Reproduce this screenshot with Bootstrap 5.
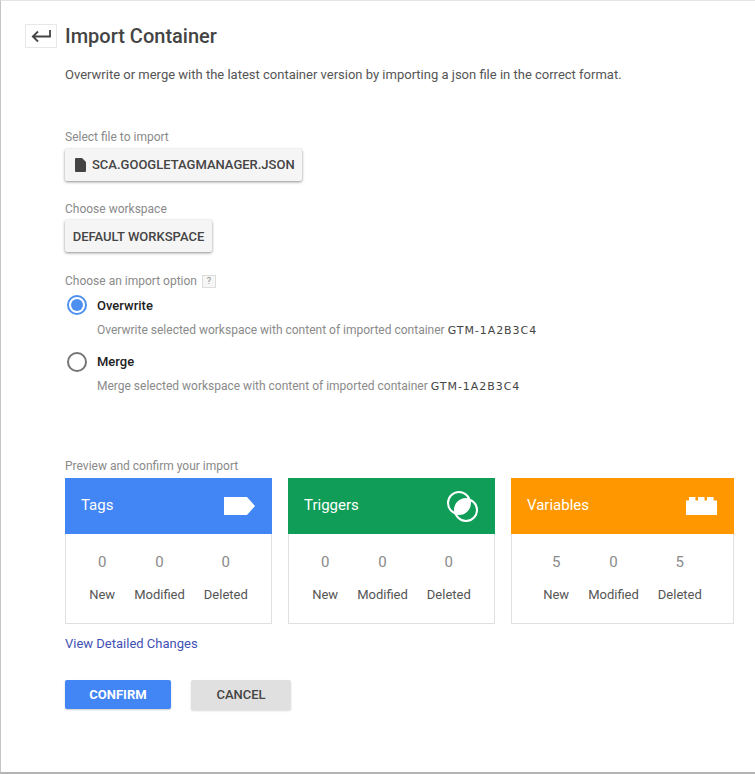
<!DOCTYPE html>
<html lang="en">
<head>
<meta charset="utf-8">
<title>Import Container</title>
<link href="https://cdn.jsdelivr.net/npm/bootstrap@5.3.0/dist/css/bootstrap.min.css" rel="stylesheet">
<style>
html,body{height:100%;}
body{background:#fff;font-family:Roboto,"Liberation Sans",sans-serif;color:#444;font-size:13px;overflow:hidden;}
.sheet{width:755px;height:774px;border-left:1px solid #c4c4c4;border-top:1px solid #e4e4e4;border-bottom:2px solid #b4b4b4;padding:0 21px 0 24px;}
.head-row{height:36px;margin-top:17px;}
.back-box{width:32px;height:24px;border:1px solid #e8e8e8;margin-right:8px;}
.page-title{font-size:20px;font-weight:500;color:#444;line-height:36px;margin:0;}
.intro{margin:11px 0 0 40px;line-height:20px;color:#555;font-size:13px;}
.body-wrap{padding-left:40px;}
.field-label{color:#8a8a8a;font-size:12px;line-height:16px;}
.gap-file{margin-top:44px;}
.gap-space{margin-top:20px;}
.gap-option{margin-top:21px;}
.gap-preview{margin-top:64px;}
.gtm-btn{background:#f5f5f5;color:#444;font-size:13px;font-weight:500;height:32px;padding:0;border:0;border-radius:2px;box-shadow:0 1px 3px rgba(0,0,0,.45);display:flex;align-items:center;white-space:nowrap;}
.btn-file{width:237px;margin-top:4px;padding-left:10px;}
.btn-file svg{margin-right:6px;flex:none;}
.btn-space{width:147px;margin-top:3px;padding-top:1px;justify-content:center;}
.help-box{width:14px;height:13px;border:1px solid #ddd;background:#f6f6f6;color:#888;font-size:9px;line-height:11px;text-align:center;margin-left:5px;}
.opt-row{margin-left:2px;}
.opt-first{margin-top:6px;}
.opt-next{margin-top:14px;}
.radio-ring{width:20px;height:20px;border-radius:50%;border:2px solid #757575;flex:none;}
.radio-ring.is-on{border-color:#4d90f0;}
.radio-dot{width:12px;height:12px;border-radius:50%;background:#4d90f0;}
.opt-name{font-size:13px;font-weight:500;color:#222;margin-left:10px;line-height:20px;height:20px;}
.opt-first .opt-name{line-height:22px;}
.opt-desc{color:#8a8a8a;font-size:12px;line-height:16px;margin:6px 0 0 32px;}
.opt-first + .opt-desc{margin-top:7px;}
.opt-desc b{font-family:"DejaVu Sans",sans-serif;font-weight:400;color:#444;font-size:11px;letter-spacing:.95px;line-height:1;}
.tiles{gap:16px;margin-top:4px;width:669px;}
.tile{width:207px;}
.tile-wide{width:223px;}
.tile-head{height:56px;padding:0 17px 0 16px;color:#fff;font-size:15px;}
.tile-name{margin-top:-2px;}
.tile-tags{background:#4285f4;}
.tile-trig{background:#0f9d58;}
.tile-vars{background:#ff9800;}
.tile-body{height:90px;border:1px solid #e0e0e0;border-top:0;padding-top:19px;gap:19px;}
.stat{text-align:center;}
.stat-num{font-size:15px;color:#8a8a8a;line-height:18px;}
.stat-name{font-size:13px;color:#555;line-height:18px;margin-top:15px;}
.detail-link{display:inline-block;color:#3f51b5;font-size:13px;line-height:16px;text-decoration:none;margin-top:12px;}
.act-row{margin-top:26px;}
.act{height:29px;border:0;border-radius:2px;font-size:13px;font-weight:500;padding:0;}
.act-go{width:106px;background:#4285f4;color:#fff;font-weight:700;padding-top:1px;box-shadow:0 1px 2px rgba(0,0,0,.2);}
.act-no{width:100px;height:30px;background:#e0e0e0;color:#444;margin-left:20px;box-shadow:0 1px 2px rgba(0,0,0,.15);}
</style>
</head>
<body>
<div class="sheet">
  <div class="head-row d-flex align-items-center">
    <div class="back-box d-flex align-items-center justify-content-center">
      <svg width="20" height="14" viewBox="0 0 20 14"><path d="M19 1V7.500H2M7 2.500 1.800 7.500 7 12.500" fill="none" stroke="#444" stroke-width="1.800"/></svg>
    </div>
    <h1 class="page-title">Import Container</h1>
  </div>
  <p class="intro">Overwrite or merge with the latest container version by importing a json file in the correct format.</p>
  <div class="body-wrap">
    <div class="field-label gap-file">Select file to import</div>
    <button class="gtm-btn btn-file" type="button">
      <svg width="11" height="14" viewBox="0 0 11 14"><path d="M1 0H7L11 4V13A1 1 0 0 1 10 14H1A1 1 0 0 1 0 13V1A1 1 0 0 1 1 0Z" fill="#444"/></svg>
      <span>SCA.GOOGLETAGMANAGER.JSON</span>
    </button>
    <div class="field-label gap-space">Choose workspace</div>
    <button class="gtm-btn btn-space" type="button">DEFAULT WORKSPACE</button>
    <div class="d-flex align-items-center gap-option">
      <span class="field-label">Choose an import option</span><span class="help-box">?</span>
    </div>
    <div class="d-flex align-items-center opt-row opt-first">
      <span class="radio-ring is-on d-flex align-items-center justify-content-center"><span class="radio-dot"></span></span>
      <span class="opt-name">Overwrite</span>
    </div>
    <div class="opt-desc">Overwrite selected workspace with content of imported container <b>GTM-1A2B3C4</b></div>
    <div class="d-flex align-items-center opt-row opt-next">
      <span class="radio-ring"></span>
      <span class="opt-name">Merge</span>
    </div>
    <div class="opt-desc">Merge selected workspace with content of imported container <b>GTM-1A2B3C4</b></div>
    <div class="field-label gap-preview">Preview and confirm your import</div>
    <div class="tiles d-flex">
      <div class="tile">
        <div class="tile-head tile-tags d-flex align-items-center justify-content-between">
          <span class="tile-name">Tags</span>
          <svg width="31" height="18" viewBox="0 0 31 18"><path d="M0 0H23L31 9 23 18H0Z" fill="#fff"/></svg>
        </div>
        <div class="tile-body d-flex justify-content-center">
          <div class="stat"><div class="stat-num">0</div><div class="stat-name">New</div></div>
          <div class="stat"><div class="stat-num">0</div><div class="stat-name">Modified</div></div>
          <div class="stat"><div class="stat-num">0</div><div class="stat-name">Deleted</div></div>
        </div>
      </div>
      <div class="tile">
        <div class="tile-head tile-trig d-flex align-items-center justify-content-between">
          <span class="tile-name">Triggers</span>
          <svg width="31" height="31" viewBox="0 0 31 31"><defs><clipPath id="trigClip"><circle cx="12" cy="12" r="11"/></clipPath></defs><circle cx="19" cy="19" r="11" fill="#fff" clip-path="url(#trigClip)"/><circle cx="12" cy="12" r="11" fill="none" stroke="#fff" stroke-width="2"/><circle cx="19" cy="19" r="11" fill="none" stroke="#fff" stroke-width="2"/></svg>
        </div>
        <div class="tile-body d-flex justify-content-center">
          <div class="stat"><div class="stat-num">0</div><div class="stat-name">New</div></div>
          <div class="stat"><div class="stat-num">0</div><div class="stat-name">Modified</div></div>
          <div class="stat"><div class="stat-num">0</div><div class="stat-name">Deleted</div></div>
        </div>
      </div>
      <div class="tile tile-wide">
        <div class="tile-head tile-vars d-flex align-items-center justify-content-between">
          <span class="tile-name">Variables</span>
          <svg width="31" height="18" viewBox="0 0 31 18"><path d="M0 18V3.500H3V0H9.500V3.500H12V0H18.500V3.500H21V0H27.500V3.500H31V18Z" fill="#fff"/></svg>
        </div>
        <div class="tile-body d-flex justify-content-center">
          <div class="stat"><div class="stat-num">5</div><div class="stat-name">New</div></div>
          <div class="stat"><div class="stat-num">0</div><div class="stat-name">Modified</div></div>
          <div class="stat"><div class="stat-num">5</div><div class="stat-name">Deleted</div></div>
        </div>
      </div>
    </div>
    <a class="detail-link" href="#">View Detailed Changes</a>
    <div class="d-flex align-items-start act-row">
      <button class="act act-go" type="button">CONFIRM</button>
      <button class="act act-no" type="button">CANCEL</button>
    </div>
  </div>
</div>
</body>
</html>
